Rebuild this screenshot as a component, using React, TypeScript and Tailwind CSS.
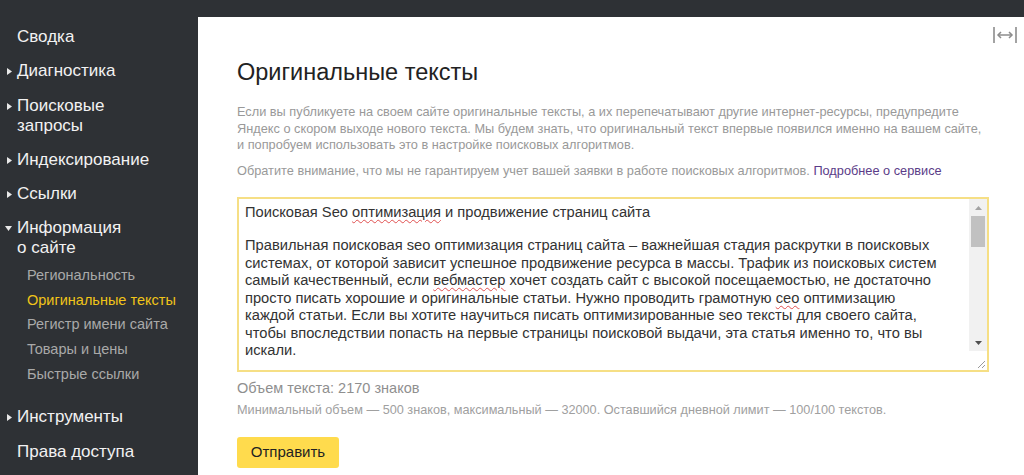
import React from "react";

const font = { fontFamily: '"Liberation Sans", Arial, sans-serif' };

type NavItem = { label: string[]; arrow?: "right" | "down" };

const topItems: NavItem[] = [
  { label: ["Сводка"] },
  { label: ["Диагностика"], arrow: "right" },
  { label: ["Поисковые", "запросы"], arrow: "right" },
  { label: ["Индексирование"], arrow: "right" },
  { label: ["Ссылки"], arrow: "right" },
  { label: ["Информация", "о сайте"], arrow: "down" },
];

const subItems = [
  "Региональность",
  "Оригинальные тексты",
  "Регистр имени сайта",
  "Товары и цены",
  "Быстрые ссылки",
];

function Arrow({ dir }: { dir: "right" | "down" }) {
  if (dir === "down") {
    return (
      <svg width="7" height="5" viewBox="0 0 7 5" className="absolute left-[5px] top-[8px]">
        <path d="M0 0 H7 L3.5 5 Z" fill="#e8e8e8" />
      </svg>
    );
  }
  return (
    <svg width="5" height="7" viewBox="0 0 5 7" className="absolute left-[7px] top-[7px]">
      <path d="M0 0 V7 L5 3.5 Z" fill="#e8e8e8" />
    </svg>
  );
}

function MainNav({ item }: { item: NavItem }) {
  return (
    <div className="relative pl-[17px] text-[17px] leading-[20px] text-[#f2f2f2]">
      {item.arrow && <Arrow dir={item.arrow} />}
      {item.label.map((l) => (
        <div key={l}>{l}</div>
      ))}
    </div>
  );
}

function Sidebar() {
  return (
    <aside className="flex w-[198px] shrink-0 flex-col pt-[27px]">
      <div className="flex flex-col gap-[14.3px]">
        {topItems.map((it) => (
          <MainNav key={it.label[0]} item={it} />
        ))}
      </div>
      <ul className="mt-[4.5px] flex flex-col pl-[27px] text-[14.5px] leading-[24.75px] text-[#a9a9a9]">
        {subItems.map((s) => (
          <li key={s} className={s === "Оригинальные тексты" ? "text-[#f0c419]" : ""}>
            {s}
          </li>
        ))}
      </ul>
      <div className="mt-[20.5px] flex flex-col gap-[15px]">
        <MainNav item={{ label: ["Инструменты"], arrow: "right" }} />
        <MainNav item={{ label: ["Права доступа"] }} />
      </div>
    </aside>
  );
}

function Squiggle({ children }: { children: React.ReactNode }) {
  return (
    <span className="underline decoration-wavy decoration-[#e05050] decoration-1 underline-offset-2">
      {children}
    </span>
  );
}

function ExpandIcon() {
  return (
    <svg width="26" height="18" viewBox="0 0 26 18" className="absolute right-[6px] top-[9px]">
      <g stroke="#8c8c8c" fill="none">
        <path d="M2 1 V17" strokeWidth="1.6" />
        <path d="M24 1 V17" strokeWidth="1.6" />
        <path d="M6 9 H20" strokeWidth="1.5" />
        <path d="M9 6 L6 9 L9 12" strokeWidth="1.5" />
        <path d="M17 6 L20 9 L17 12" strokeWidth="1.5" />
      </g>
    </svg>
  );
}

function FakeTextarea() {
  return (
    <div className="mt-[18px] flex h-[175px] w-[752px] border-2 border-[#f6df85] bg-white">
      <div className="flex-1 overflow-hidden pl-[6px] pt-[5px] text-[14.7px] leading-[17.5px] text-[#333]">
        <div className="whitespace-nowrap">
          Поисковая Seo <Squiggle>оптимизация</Squiggle> и продвижение страниц сайта
        </div>
        <div className="h-[15.5px]" />
        <div className="whitespace-nowrap">
          Правильная поисковая seo оптимизация страниц сайта – важнейшая стадия раскрутки в поисковых
        </div>
        <div className="whitespace-nowrap">
          системах, от которой зависит успешное продвижение ресурса в массы. Трафик из поисковых систем
        </div>
        <div className="whitespace-nowrap">
          самый качественный, если <Squiggle>вебмастер</Squiggle> хочет создать сайт с высокой посещаемостью, не достаточно
        </div>
        <div className="whitespace-nowrap">
          просто писать хорошие и оригинальные статьи. Нужно проводить грамотную <Squiggle>сео</Squiggle> оптимизацию
        </div>
        <div className="whitespace-nowrap">
          каждой статьи. Если вы хотите научиться писать оптимизированные seo тексты для своего сайта,
        </div>
        <div className="whitespace-nowrap">
          чтобы впоследствии попасть на первые страницы поисковой выдачи, эта статья именно то, что вы
        </div>
        <div className="whitespace-nowrap">искали.</div>
      </div>
      <div className="flex w-[18px] flex-col">
        <div className="flex h-[152px] flex-col bg-[#f1f1f1]">
          <div className="flex h-[17px] items-center justify-center">
            <svg width="7" height="4" viewBox="0 0 7 4">
              <path d="M0 4 L3.5 0 L7 4 Z" fill="#a3a3a3" />
            </svg>
          </div>
          <div className="mx-[2px] h-[31px] bg-[#c1c1c1]" />
          <div className="flex-1" />
          <div className="flex h-[17px] items-center justify-center">
            <svg width="7" height="4" viewBox="0 0 7 4">
              <path d="M0 0 L3.5 4 L7 0 Z" fill="#505050" />
            </svg>
          </div>
        </div>
        <div className="relative flex-1 bg-white">
          <svg width="9" height="9" viewBox="0 0 9 9" className="absolute bottom-[1px] right-[1px]">
            <path d="M1 8 L8 1 M5 8 L8 5" stroke="#9a9a9a" strokeWidth="1" />
          </svg>
        </div>
      </div>
    </div>
  );
}

export default function App() {
  return (
    <div className="flex h-[475px] w-[1024px] overflow-hidden bg-[#2e3135]" style={font}>
      <Sidebar />
      <main className="mt-[17px] flex-1 bg-white">
        <div className="relative h-full pl-[39px] pt-[41px]">
          <ExpandIcon />
          <h1 className="text-[23.5px] leading-[28px] text-[#222]">Оригинальные тексты</h1>
          <p className="mt-[18px] text-[12.75px] leading-[16.5px] text-[#999]">
            Если вы публикуете на своем сайте оригинальные тексты, а их перепечатывают другие интернет-ресурсы, предупредите
            <br />
            Яндекс о скором выходе нового текста. Мы будем знать, что оригинальный текст впервые появился именно на вашем сайте,
            <br />
            и попробуем использовать это в настройке поисковых алгоритмов.
          </p>
          <p className="mt-[9px] text-[12.75px] leading-[16.5px] text-[#999]">
            Обратите внимание, что мы не гарантируем учет вашей заявки в работе поисковых алгоритмов.{" "}
            <a className="text-[#5b3c88]">Подробнее о сервисе</a>
          </p>
          <FakeTextarea />
          <div className="mt-[7px] text-[14.5px] leading-[18px] text-[#8f8f8f]">Объем текста: 2170 знаков</div>
          <div className="mt-[5px] text-[12.7px] leading-[16px] text-[#a0a0a0]">
            Минимальный объем — 500 знаков, максимальный — 32000. Оставшийся дневной лимит — 100/100 текстов.
          </div>
          <button className="mt-[19px] h-[31px] w-[102px] rounded-[3px] bg-[#ffdb4d] text-[15px] text-[#222]">
            Отправить
          </button>
        </div>
      </main>
    </div>
  );
}
